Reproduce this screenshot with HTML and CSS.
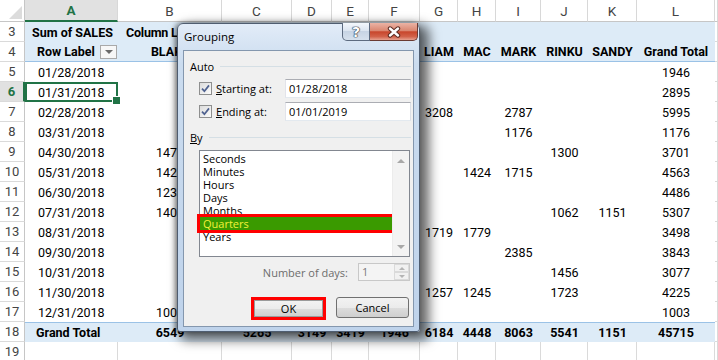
FILE: index.html
```html
<!DOCTYPE html>
<html lang="en">

<head>
    <meta charset="UTF-8">
    <title>Grouping</title>
    <link rel="stylesheet" href="styles.css">
</head>

<body>
    <div class="sheet"></div>

    <div class="dialog">
        <div class="titlebar">
            <span class="title">Grouping</span>
            <span class="tbtn help">?</span>
            <span class="tbtn close">
                <svg width="16" height="12" viewBox="0 0 16 12">
                    <path d="M4 2.5 L12 9.5 M12 2.5 L4 9.5" stroke="#5b2b22" stroke-width="4.4" stroke-linecap="round" />
                    <path d="M4 2.5 L12 9.5 M12 2.5 L4 9.5" stroke="#ffffff" stroke-width="2.4" stroke-linecap="round" />
                </svg>
            </span>
        </div>
        <div class="client">
            <div class="legend auto">Auto</div>
            <div class="field">
                <span class="check"><svg width="9" height="9" viewBox="0 0 9 9"><path d="M1 4.6 L3.4 7.2 L8 1.4" fill="none" stroke="#4f6290" stroke-width="1.7" /></svg></span>
                <span class="flabel"><u>S</u>tarting at:</span>
                <span class="input">01/28/2018</span>
            </div>
            <div class="field second">
                <span class="check"><svg width="9" height="9" viewBox="0 0 9 9"><path d="M1 4.6 L3.4 7.2 L8 1.4" fill="none" stroke="#4f6290" stroke-width="1.7" /></svg></span>
                <span class="flabel"><u>E</u>nding at:</span>
                <span class="input">01/01/2019</span>
            </div>
            <div class="legend by"><span><u>B</u>y</span></div>
            <div class="listbox">
                <ul class="items">
                    <li>Seconds</li>
                    <li>Minutes</li>
                    <li>Hours</li>
                    <li>Days</li>
                    <li>Months</li>
                    <li class="picked">Quarters</li>
                    <li>Years</li>
                </ul>
                <div class="scroll">
                    <span class="arrow up"></span>
                    <span class="arrow down"></span>
                </div>
            </div>
            <div class="days">
                <span class="dlabel">Number of days:</span>
                <span class="spin">
                    <span class="spinval">1</span>
                    <span class="spinbtns">
                        <span class="sb"><i class="tri up"></i></span>
                        <span class="sb"><i class="tri down"></i></span>
                    </span>
                </span>
            </div>
            <div class="buttons">
                <span class="mark"><span class="btn ok">OK</span></span>
                <span class="btn cancel">Cancel</span>
            </div>
        </div>
    </div>

    <script>
        const letters = ["A", "B", "C", "D", "E", "F", "G", "H", "I", "J", "K", "L"];
        const names = ["BLAKE", "CHRIS", "DANNY", "EVAN", "JACK", "LIAM", "MAC", "MARK", "RINKU", "SANDY", "Grand Total"];

        // A, B, C, D, E, F, G, H, I, J, K, L  (C-F sit under the dialog)
        const rows = [
            ["01/28/2018", "", "", "", "", "", "", "", "", "", "", "1946"],
            ["01/31/2018", "", "", "", "", "", "", "", "", "", "", "2895"],
            ["02/28/2018", "", "", "", "", "", "3208", "", "2787", "", "", "5995"],
            ["03/31/2018", "", "", "", "", "", "", "", "1176", "", "", "1176"],
            ["04/30/2018", "1479", "", "", "", "", "", "", "", "1300", "", "3701"],
            ["05/31/2018", "1424", "", "", "", "", "", "1424", "1715", "", "", "4563"],
            ["06/30/2018", "1238", "", "", "", "", "", "", "", "", "", "4486"],
            ["07/31/2018", "1405", "", "", "", "", "", "", "", "1062", "1151", "5307"],
            ["08/31/2018", "", "", "", "", "", "1719", "1779", "", "", "", "3498"],
            ["09/30/2018", "", "", "", "", "", "", "", "2385", "", "", "3843"],
            ["10/31/2018", "", "", "", "", "", "", "", "", "1456", "", "3077"],
            ["11/30/2018", "", "", "", "", "", "1257", "1245", "", "1723", "", "4225"],
            ["12/31/2018", "1003", "", "", "", "", "", "", "", "", "", "1003"]
        ];

        const total = ["Grand Total", "6549", "5265", "3149", "3419", "1946", "6184", "4448", "8063", "5541", "1151", "45715"];

        const sheet = document.querySelector(".sheet");

        function addCell(text, cls) {
            const div = document.createElement("div");
            div.className = "cell " + cls;
            div.textContent = text;
            sheet.appendChild(div);
            return div;
        }

        // column letters
        addCell("", "corner");
        letters.forEach(l => addCell(l, l == "A" ? "colhead active" : "colhead"));
        addCell("", "colhead");

        // row 3
        addCell("3", "rowhead");
        addCell("Sum of SALES", "pv band bold sum");
        addCell("Column Labels", "pv band bold collabel");
        for (let i = 0; i < 10; i++) addCell("", "pv band");
        addCell("", "grid");

        // row 4
        addCell("4", "rowhead");
        const rowLabel = addCell("Row Label", "pv band bold under rowlabel");
        const drop = document.createElement("span");
        drop.className = "drop";
        rowLabel.appendChild(drop);
        names.forEach(n => addCell(n, "pv band bold under"));
        addCell("", "grid");

        // data rows
        rows.forEach((row, i) => {
            const nr = i + 5;
            addCell(nr, nr == 6 ? "rowhead active" : "rowhead");
            addCell(row[0], nr == 6 ? "pv date selected" : "pv date");
            row.slice(1).forEach(v => addCell(v, "pv"));
            addCell("", "grid");
        });

        // row 18
        addCell("18", "rowhead");
        addCell(total[0], "pv band bold over totallabel");
        total.slice(1).forEach(v => addCell(v, "pv band bold over"));
        addCell("", "grid");

        // row 19
        addCell("19", "rowhead");
        for (let i = 0; i < 13; i++) addCell("", "grid");
    </script>
</body>

</html>
```

FILE: styles.css
```css
* {
    box-sizing: border-box;
}

body {
    margin: 0;
    width: 718px;
    height: 360px;
    overflow: hidden;
    position: relative;
    background-color: white;
    font-family: Roboto, "Liberation Sans", sans-serif;
}

/* ---------- spreadsheet ---------- */

.sheet {
    display: grid;
    grid-template-columns: 25px 93px 104px 70px 40px 37px 51px 38px 38px 45px 47px 49px 78px 3px;
    grid-template-rows: 22px;
    grid-auto-rows: 20px;
    font-size: 12.5px;
    color: #000;
}

.cell {
    display: flex;
    align-items: center;
    justify-content: center;
    white-space: nowrap;
}

.corner {
    justify-content: flex-end;
    align-items: flex-end;
    padding: 0 2px 2px 0;
    border-right: 1px solid #c6c6c6;
    border-bottom: 1px solid #c6c6c6;
}

.corner::after {
    content: "";
    width: 0;
    height: 0;
    border-left: 13px solid transparent;
    border-bottom: 13px solid #dcdcdc;
}

.colhead {
    color: #444;
    font-size: 13.5px;
    border-right: 1px solid #d8d8d8;
    border-bottom: 1px solid #c6c6c6;
}

.colhead.active {
    background-color: #e1e1e1;
    color: #217346;
    font-weight: bold;
    border-bottom: 2px solid #217346;
}

.rowhead {
    color: #444;
    font-size: 13px;
    border-right: 1px solid #c6c6c6;
    border-bottom: 1px solid #dadada;
}

.rowhead.active {
    background-color: #e1e1e1;
    color: #217346;
    font-weight: bold;
    border-right: 2px solid #217346;
}

.grid {
    border-right: 1px solid #dadada;
    border-bottom: 1px solid #dadada;
}

.band {
    background-color: #ddebf7;
}

.bold {
    font-weight: bold;
}

.under {
    border-bottom: 1px solid #9bc2e6;
}

.over {
    border-top: 1px solid #9bc2e6;
}

.sum {
    justify-content: flex-start;
    padding-left: 7px;
}

.collabel {
    justify-content: flex-start;
    padding-left: 8px;
    letter-spacing: -0.2px;
}

.rowlabel {
    justify-content: flex-start;
    padding-left: 12px;
    padding-right: 1px;
}

.drop {
    margin-left: auto;
    width: 17px;
    height: 14px;
    border: 1px solid #a9a9a9;
    background-color: #f7f7f7;
    display: flex;
    align-items: center;
    justify-content: center;
}

.drop::after {
    content: "";
    border-left: 4px solid transparent;
    border-right: 4px solid transparent;
    border-top: 4px solid #6a6a6a;
}

.date {
    justify-content: flex-start;
    padding-left: 13px;
}

.totallabel {
    justify-content: flex-start;
    padding-left: 11px;
}

.selected {
    position: relative;
    border: 2px solid #217346;
    padding-left: 11px;
}

.selected::after {
    content: "";
    position: absolute;
    right: -5px;
    bottom: -5px;
    width: 7px;
    height: 7px;
    background-color: #217346;
    border: 1px solid #fff;
}

/* ---------- dialog ---------- */

.dialog {
    position: absolute;
    left: 177px;
    top: 23px;
    width: 243px;
    height: 309px;
    display: flex;
    flex-direction: column;
    padding: 0 5px 4px 5px;
    border: 1px solid #4f5d70;
    border-radius: 6px 6px 3px 3px;
    background: linear-gradient(#e2ecf8, #cbdcef 40px, #bfd3eb);
    box-shadow: 6px 5px 12px 3px rgba(0, 0, 0, 0.6), -2px 0 5px rgba(0, 0, 0, 0.4);
    font-family: "Open Sans", "Noto Sans", sans-serif;
    font-size: 11px;
    color: #000;
}

.titlebar {
    height: 26px;
    display: flex;
    align-items: flex-start;
    margin-right: -4px;
}

.title {
    flex: 1;
    margin-top: 5px;
    margin-left: 1px;
    font-size: 11.5px;
    line-height: 16px;
}

.tbtn {
    height: 18px;
    margin-top: -1px;
    display: flex;
    align-items: center;
    justify-content: center;
    border: 1px solid #5d6b80;
    border-top: none;
}

.help {
    width: 28px;
    border-radius: 0 0 0 5px;
    background: linear-gradient(#f3f7fc, #dce5f0 45%, #c7d4e4 50%, #d6e1ed);
    color: #fff;
    font-family: "DejaVu Sans", sans-serif;
    font-weight: bold;
    font-size: 14px;
    text-shadow: 0 0 1px #2e3b4e, 0 0 1px #2e3b4e, 0 0 1px #2e3b4e, 0 0 1px #2e3b4e;
}

.close {
    width: 48px;
    border-left: none;
    border-color: #6a3a33;
    border-radius: 0 0 5px 0;
    background: linear-gradient(#ebb3a5, #da8771 45%, #c8462c 52%, #d2624a 80%, #e6a290);
}

.client {
    flex: 1;
    background-color: #f0f0f0;
    border: 1px solid #8497ae;
    padding: 7px 2px 0 6px;
    display: flex;
    flex-direction: column;
}

.legend {
    height: 16px;
    display: flex;
    align-items: center;
}

.legend::after {
    content: "";
    flex: 1;
    height: 1px;
    background-color: #d5dfe5;
    margin-left: 6px;
}

.legend.by {
    margin-top: 8px;
}

.field {
    height: 19px;
    margin-top: 5px;
    padding-left: 9px;
    display: flex;
    align-items: center;
}

.field.second {
    margin-top: 4px;
}

.check {
    width: 13px;
    height: 13px;
    border: 1px solid #8e8f8f;
    background: linear-gradient(135deg, #dcdcdc, #fbfbfb);
    display: flex;
    align-items: center;
    justify-content: center;
}

.flabel {
    flex: 1;
    margin-left: 4px;
}

.input {
    width: 126px;
    height: 19px;
    border: 1px solid #abadb3;
    border-color: #abadb3 #dbdfe6 #e3e9ef #e2e3ea;
    background-color: #fff;
    padding-left: 3px;
    line-height: 17px;
}

.listbox {
    height: 107px;
    margin: 5px 1px 0 9px;
    border: 1px solid #828790;
    background-color: #fff;
    display: flex;
}

.items {
    flex: 1;
    list-style: none;
    margin: 0;
    padding: 1px 0 0 0;
}

.items li {
    height: 13px;
    line-height: 13px;
    padding-left: 3px;
}

.items .picked {
    background-color: #3a9a00;
    color: #f4f03a;
    outline: 3px solid #ff0000;
    box-shadow: 5px 0 0 #f2e400;
}

.scroll {
    width: 17px;
    background-color: #f3f3f3;
    border-left: 1px solid #ececec;
    display: flex;
    flex-direction: column;
    justify-content: space-between;
    align-items: center;
    padding: 8px 0 7px 0;
}

.arrow {
    width: 0;
    height: 0;
    border-left: 4px solid transparent;
    border-right: 4px solid transparent;
}

.arrow.up {
    border-bottom: 4px solid #a8a8a8;
}

.arrow.down {
    border-top: 4px solid #a8a8a8;
}

.days {
    height: 18px;
    margin-top: 6px;
    display: flex;
    justify-content: flex-end;
    align-items: center;
}

.dlabel {
    color: #6d6d6d;
    margin-right: 10px;
}

.spin {
    width: 52px;
    height: 18px;
    margin-right: 1px;
    border: 1px solid #c8c8c8;
    background-color: #f4f4f4;
    display: flex;
}

.spinval {
    flex: 1;
    padding-left: 3px;
    line-height: 16px;
    color: #7a7a7a;
}

.spinbtns {
    width: 15px;
    display: flex;
    flex-direction: column;
}

.sb {
    flex: 1;
    border: 1px solid #dadada;
    background-color: #f1f1f1;
    display: flex;
    align-items: center;
    justify-content: center;
}

.tri {
    width: 0;
    height: 0;
    border-left: 3px solid transparent;
    border-right: 3px solid transparent;
}

.tri.up {
    border-bottom: 3px solid #b4b4b4;
}

.tri.down {
    border-top: 3px solid #b4b4b4;
}

.buttons {
    margin-top: 16px;
    margin-right: 2px;
    display: flex;
    justify-content: flex-end;
    align-items: flex-start;
    gap: 10px;
}

.mark {
    width: 75px;
    height: 23px;
    border: 3px solid #ff0000;
    display: flex;
}

.btn {
    display: flex;
    align-items: center;
    justify-content: center;
    border: 1px solid #707070;
    border-radius: 3px;
    background: linear-gradient(#f2f2f2, #ebebeb 50%, #dddddd 51%, #cfcfcf);
}

.btn.ok {
    flex: 1;
    border-color: #9a9a9a;
    border-radius: 0;
}

.btn.cancel {
    width: 73px;
    height: 21px;
}
```
